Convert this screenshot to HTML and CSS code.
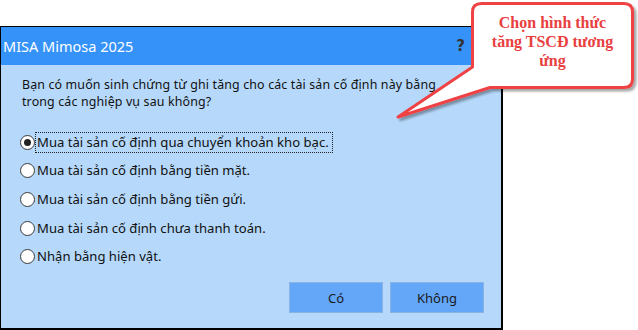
FILE: index.html
```html
<!DOCTYPE html>
<html lang="vi">
<head>
    <meta charset="UTF-8">
    <title>MISA Mimosa 2025</title>
    <link rel="stylesheet" href="styles.css">
</head>
<body>
    <div class="page">
        <!-- Dialog -->
        <div class="dialog">
            <div class="title-bar">
                <span class="title">MISA Mimosa 2025</span>
                <span class="help">?</span>
            </div>
            <div class="dialog-body">
                <p class="question">Bạn có muốn sinh chứng từ ghi tăng cho các tài sản cố định này bằng<br>trong các nghiệp vụ sau không?</p>
                <div class="options">
                    <label class="option"><span class="radio checked"></span><span class="option-text focused">Mua tài sản cố định qua chuyển khoản kho bạc.</span></label>
                    <label class="option"><span class="radio"></span><span class="option-text">Mua tài sản cố định bằng tiền mặt.</span></label>
                    <label class="option"><span class="radio"></span><span class="option-text">Mua tài sản cố định bằng tiền gửi.</span></label>
                    <label class="option"><span class="radio"></span><span class="option-text">Mua tài sản cố định chưa thanh toán.</span></label>
                    <label class="option"><span class="radio"></span><span class="option-text">Nhận bằng hiện vật.</span></label>
                </div>
                <div class="buttons">
                    <button class="btn">Có</button>
                    <button class="btn">Không</button>
                </div>
            </div>
        </div>

        <!-- Callout -->
        <svg class="callout-shape" width="638" height="130" viewBox="0 0 638 130">
            <defs>
                <filter id="shadow" x="-10%" y="-10%" width="130%" height="140%">
                    <feDropShadow dx="2.5" dy="2.5" stdDeviation="1.2" flood-color="#000" flood-opacity="0.35"/>
                </filter>
            </defs>
            <path d="M481.5 3.5 H624 Q632.5 3.5 632.5 12 V79 Q632.5 87.5 624 87.5 H490 L398 117 L472.5 67 V12 Q472.5 3.5 481.5 3.5 Z"
                  fill="#fff" stroke="#ef4245" stroke-width="3" stroke-linejoin="round" filter="url(#shadow)"/>
        </svg>
        <div class="callout-text">Chọn hình thức<br>tăng TSCĐ tương<br>ứng</div>
    </div>
</body>
</html>
```

FILE: styles.css
```css
body {
    margin: 0;
    background: #fff;
    font-family: "Noto Sans", "Liberation Sans", sans-serif;
}
.page {
    position: relative;
    width: 638px;
    height: 330px;
    padding-top: 26px;
    box-sizing: border-box;
}
.dialog {
    width: 503px;
    height: 304px;
    box-sizing: border-box;
    border: 1px solid #000;
    border-right-width: 2px;
    border-bottom-width: 2px;
    background: #b6d9fb;
    display: flex;
    flex-direction: column;
}
.title-bar {
    height: 38px;
    background: #3592f9;
    display: flex;
    align-items: center;
    justify-content: space-between;
    padding: 0 36px 0 2px;
}
.title {
    color: #fff;
    font-size: 14.5px;
}
.help {
    color: #333;
    font-family: "DejaVu Sans", sans-serif;
    font-weight: bold;
    font-size: 15px;
}
.dialog-body {
    flex: 1;
    display: flex;
    flex-direction: column;
    padding: 0 17px 15px 21px;
}
.question {
    margin: 11px 0 0;
    font-size: 12.4px;
    letter-spacing: 0.15px;
    line-height: 17px;
    color: #111;
}
.options {
    margin-top: 18px;
    display: flex;
    flex-direction: column;
}
.option {
    height: 28.6px;
    display: flex;
    align-items: center;
    font-size: 13.1px;
    color: #111;
}
.radio {
    width: 13px;
    height: 13px;
    border: 1px solid #3a3a3a;
    border-radius: 50%;
    background: #fff;
    display: flex;
    align-items: center;
    justify-content: center;
    flex-shrink: 0;
    margin-left: -2px;
}
.radio.checked::after {
    content: "";
    width: 7px;
    height: 7px;
    border-radius: 50%;
    background: #222;
}
.option-text {
    padding: 0 3px 1px 1px;
    border: 1px dotted transparent;
}
.option-text.focused {
    border-color: #222;
}
.buttons {
    margin-top: auto;
    display: flex;
    justify-content: flex-end;
    gap: 7px;
}
.btn {
    width: 94px;
    height: 31px;
    background: #64a7f8;
    border: 1px solid #88b3e2;
    font-family: "Noto Sans", "Liberation Sans", sans-serif;
    font-size: 13px;
    color: #1a1a1a;
}
.callout-shape {
    position: absolute;
    left: 0;
    top: 0;
}
.callout-text {
    position: absolute;
    left: 474px;
    top: 13px;
    width: 157px;
    text-align: center;
    font-family: "Liberation Serif", serif;
    font-weight: bold;
    font-size: 16px;
    line-height: 19px;
    color: #e8403f;
}
```
